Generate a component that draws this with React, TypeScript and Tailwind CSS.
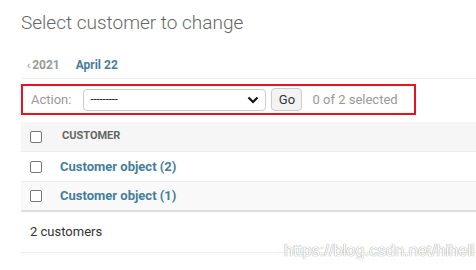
import React from 'react';

const rows = [
  { label: 'Customer object (2)', alt: false },
  { label: 'Customer object (1)', alt: true },
];

const Checkbox = () => (
  <span className="block w-[12px] h-[12px] rounded-[2px] border border-[#767676] bg-white" />
);

export default function App() {
  return (
    <div className="relative w-[476px] h-[270px] overflow-hidden bg-white pl-[21px] pt-[10px] font-['Roboto',sans-serif] text-[#333]">
      <h1 className="text-[19px] font-light text-[#666] leading-[26px] mb-[19px]">Select customer to change</h1>

      <div className="flex items-center h-[24px] pl-[6px] pb-[3px] border-b border-[#eee] text-[12px] font-bold mb-[5px]">
        <span className="text-[#999]">
          <span className="mr-[2px] text-[10px]">‹</span>2021
        </span>
        <span className="ml-[16px] text-[#447e9b]">April 22</span>
      </div>

      <div className="flex items-center w-[395px] h-[31px] border-2 border-[#e8131f] pl-[8px] text-[13px] text-[#999]">
        <span className="mr-[12px]">Action:</span>
        <div className="flex items-center justify-between w-[183px] h-[22px] rounded-[4px] border border-[#ccc] bg-white pl-[6px] pr-[6px] text-black">
          <span className="text-[11px] leading-none">---------</span>
          <svg width="12" height="8" viewBox="0 0 12 8">
            <path d="M1.5 1.5 L6 6 L10.5 1.5" fill="none" stroke="#111" strokeWidth="2.2" />
          </svg>
        </div>
        <button className="ml-[5px] w-[31px] h-[23px] rounded-[4px] border border-[#ccc] bg-[#f3f3f3] text-[13px] text-[#333]">
          Go
        </button>
        <span className="ml-[10px]">0 of 2 selected</span>
      </div>

      <div className="mt-[7px]">
        <div className="flex items-center h-[30px] bg-[#f6f6f6] border-b border-[#eee] pl-[9px]">
          <Checkbox />
          <span className="ml-[20px] text-[11px] font-bold uppercase text-[#666]">Customer</span>
        </div>
        {rows.map((r, i) => (
          <div
            key={i}
            className={`flex items-center h-[30px] pl-[9px] border-b ${r.alt ? 'bg-[#f9f9f9] border-[#ddd] border-b-2' : 'bg-white border-[#eee]'}`}
          >
            <Checkbox />
            <span className="ml-[18px] text-[13px] font-bold text-[#447e9b]">{r.label}</span>
          </div>
        ))}
        <div className="flex items-center h-[41px] pl-[9px] border-b border-[#eee] text-[13px] text-[#333]">
          2 customers
        </div>
      </div>

      <div className="absolute left-[284px] top-[240px] text-[16.5px] leading-[20px] text-white font-['Liberation_Sans',sans-serif] [text-shadow:0_0_1px_#999,0_0_1px_#aaa]">
        https://blog.csdn.net/hihell
      </div>
    </div>
  );
}
